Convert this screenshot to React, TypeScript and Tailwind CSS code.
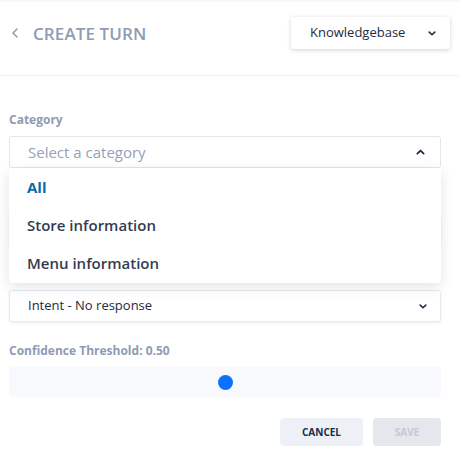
import React from "react";

const ChevronDown = ({ className = "" }: { className?: string }) => (
  <svg viewBox="0 0 10 6" className={className} fill="none" stroke="currentColor" strokeWidth="2" strokeLinecap="round" strokeLinejoin="round">
    <path d="M1.5 1.2 L5 4.6 L8.5 1.2" />
  </svg>
);
const ChevronUp = ({ className = "" }: { className?: string }) => (
  <svg viewBox="0 0 10 6" className={className} fill="none" stroke="currentColor" strokeWidth="2" strokeLinecap="round" strokeLinejoin="round">
    <path d="M1.5 4.8 L5 1.4 L8.5 4.8" />
  </svg>
);

export default function App() {
  return (
    <div className="w-[459px] h-[455px] bg-white overflow-hidden" style={{ fontFamily: '"Open Sans", "Noto Sans", sans-serif' }}>
      <div className="h-[2px] bg-[#f6f7f9]" />
      <div className="h-[74px] border-b border-[#eef0f4] flex items-start justify-between pl-[12px] pr-[9px] pt-[15px]">
        <div className="flex items-center h-[32px]">
          <svg viewBox="0 0 6 10" className="w-[6px] h-[10px] text-[#8f9bb3]" fill="none" stroke="currentColor" strokeWidth="1.5" strokeLinecap="round" strokeLinejoin="round">
            <path d="M5 1 L1 5 L5 9" />
          </svg>
          <span className="ml-[15px] text-[17px] font-semibold text-[#8f9bb3] leading-none tracking-[0.1px]">CREATE TURN</span>
        </div>
        <div className="w-[159px] h-[32px] rounded-[2px] bg-white shadow-[0_1px_4px_rgba(0,0,0,0.18)] flex items-center justify-between pl-[19px] pr-[14px]">
          <span className="text-[13px] text-[#222b45]">Knowledgebase</span>
          <ChevronDown className="w-[8px] h-[5px] text-[#222b45]" />
        </div>
      </div>

      <div className="pl-[9px] pr-[18px] pt-[36px] flex flex-col gap-[21px]">
        <div className="relative">
          <div className="h-[16px] mb-[8px] text-[12px] font-bold text-[#8f9bb3] leading-[16px]">Category</div>
          <div className="h-[32px] border border-[#e1e6ef] rounded-[3px] flex items-center justify-between pl-[18px] pr-[15px]">
            <span className="text-[15px] text-[#96a1b8]">Select a category</span>
            <ChevronUp className="w-[9px] h-[6px] text-[#222b45]" />
          </div>
          <div className="absolute left-0 right-0 top-[56px] z-10 bg-white rounded-b-[4px] shadow-[0_4px_14px_rgba(0,0,0,0.11)] py-0">
            <div className="h-[38px] flex items-center pl-[18px] text-[15px] font-bold text-[#0d6aa6]">All</div>
            <div className="h-[38px] flex items-center pl-[18px] text-[15px] font-semibold text-[#333b52]">Store information</div>
            <div className="h-[39px] flex items-center pl-[18px] text-[15px] font-semibold text-[#333b52]">Menu information</div>
          </div>
        </div>

        <div>
          <div className="h-[16px] mb-[8px]" />
          <div className="h-[32px] border border-[#e1e6ef] rounded-[3px] shadow-[0_1px_3px_rgba(0,0,0,0.06)]" />
        </div>

        <div>
          <div className="h-[16px] mb-[8px]" />
          <div className="h-[32px] border border-[#e6eaf1] rounded-[3px] shadow-[0_1px_3px_rgba(0,0,0,0.07)] flex items-center justify-between pl-[18px] pr-[13px]">
            <span className="text-[13px] text-[#222b45]">Intent - No response</span>
            <ChevronDown className="w-[8px] h-[5px] text-[#222b45]" />
          </div>
        </div>

        <div>
          <div className="h-[16px] mb-[8px] text-[12px] font-bold text-[#8f9bb3] leading-[16px]">Confidence Threshold: 0.50</div>
          <div className="h-[30px] rounded-[4px] bg-[#f7f9fc] flex items-center justify-center">
            <div className="w-[15px] h-[15px] rounded-full bg-[#0a72ff]" />
          </div>
        </div>

        <div className="flex justify-end gap-[10px] pt-[0px]">
          <button className="w-[83px] h-[28px] rounded-[4px] bg-[#edf1f7] text-[10px] font-bold text-[#222b45]">CANCEL</button>
          <button className="w-[68px] h-[28px] rounded-[4px] bg-[#e4e7ee] text-[10px] font-bold text-[#c3c9d5]">SAVE</button>
        </div>
      </div>
    </div>
  );
}
